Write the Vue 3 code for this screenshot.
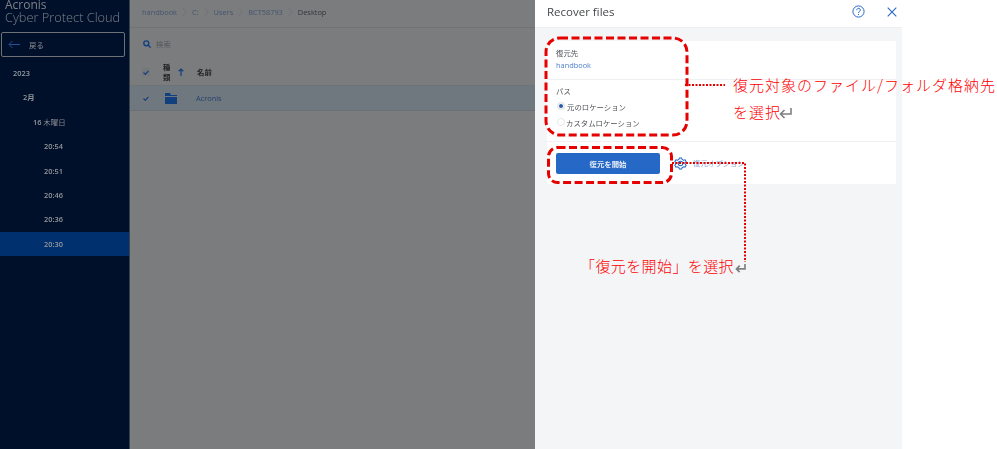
<template>
  <div class="screen">
    <aside class="sidebar">
      <div class="brand">
        <div class="brand-top">Acronis</div>
        <div class="brand-sub">Cyber Protect Cloud</div>
      </div>
      <button class="back" type="button">
        <svg width="12" height="9" viewBox="0 0 12 9" fill="none" stroke="#1f4f9a" stroke-width="1">
          <path d="M12 4.5H1M4.5 1L1 4.5 4.5 8" />
        </svg>
        <span>戻る</span>
      </button>
      <ul class="tree">
        <li
          v-for="row in tree"
          :key="row.label"
          :class="{ active: row.active }"
          :style="{ paddingLeft: row.indent + 'px' }"
        >
          <b>{{ row.label }}</b>{{ row.extra }}
        </li>
      </ul>
    </aside>

    <main class="browser">
      <nav class="crumbs">
        <template v-for="(c, i) in crumbs" :key="c">
          <span :class="{ last: i === crumbs.length - 1 }">{{ c }}</span>
          <svg v-if="i < crumbs.length - 1" width="5" height="8" viewBox="0 0 5 8" fill="none" stroke="#727375">
            <path d="M1 0l3 4-3 4" />
          </svg>
        </template>
      </nav>
      <div class="search">
        <svg width="8" height="8" viewBox="0 0 9 9" fill="none" stroke="#123f7e" stroke-width="1.5">
          <circle cx="3.7" cy="3.7" r="2.8" />
          <path d="M5.8 5.8L8.6 8.6" />
        </svg>
        <span>検索</span>
      </div>
      <div class="thead">
        <span class="check"><svg width="6" height="5" viewBox="0 0 6 5" fill="none" stroke="#123f7e" stroke-width="1.2"><path d="M.5 2.5l1.8 1.8L5.5.8" /></svg></span>
        <span class="kind">種<br />類</span>
        <svg class="sort" width="6" height="8" viewBox="0 0 6 8" fill="none" stroke="#123f7e" stroke-width="1.2">
          <path d="M3 8V1M.7 3.2L3 1l2.3 2.2" />
        </svg>
        <span class="name">名前</span>
      </div>
      <div class="trow">
        <span class="check"><svg width="6" height="5" viewBox="0 0 6 5" fill="none" stroke="#123f7e" stroke-width="1.2"><path d="M.5 2.5l1.8 1.8L5.5.8" /></svg></span>
        <svg class="folder" width="12" height="11" viewBox="0 0 12 11" fill="#123f7e">
          <path d="M0 0h5l1 2h6v1H0zM0 4h12v7H0z" />
        </svg>
        <span class="file">Acronis</span>
      </div>
    </main>

    <section class="panel">
      <header class="panel-head">
        <h1>Recover files</h1>
        <svg width="13" height="13" viewBox="0 0 13 13" fill="none" stroke="#2668c5">
          <circle cx="6.5" cy="6.5" r="5.6" />
          <path d="M4.7 5.2c0-2.4 3.7-2.4 3.7-.2 0 1.4-1.9 1.4-1.9 2.9M6.5 9v1" />
        </svg>
        <svg class="close" width="10" height="10" viewBox="0 0 10 10" fill="none" stroke="#2668c5" stroke-width="1.1">
          <path d="M.7.7l8.6 8.6M9.3.7L.7 9.3" />
        </svg>
      </header>
      <div class="card">
        <div class="field">
          <label>復元先</label>
          <a>handbook</a>
        </div>
        <div class="field path">
          <label>パス</label>
          <div class="radio on"><i></i>元のロケーション</div>
          <div class="radio"><i></i>カスタムロケーション</div>
        </div>
        <div class="actions">
          <button class="start" type="button">復元を開始</button>
          <svg width="13" height="13" viewBox="0 0 14 14" fill="none" stroke="#2668c5" stroke-width="1.1">
            <circle cx="7" cy="7" r="2.4" />
            <path d="M5.8 1h2.4l.5 1.6 1.6.9 1.6-.4 1.2 2-1.1 1.2v1.4l1.1 1.2-1.2 2-1.6-.4-1.6.9-.5 1.6H5.8l-.5-1.6-1.6-.9-1.6.4-1.2-2 1.1-1.2V6.3L.9 5.1l1.2-2 1.6.4 1.6-.9z" />
          </svg>
          <a>復元オプション</a>
        </div>
      </div>
    </section>

    <div class="margin"></div>

    <!-- annotations drawn over the screenshot -->
    <svg class="marks" width="997" height="449" viewBox="0 0 997 449" fill="none" stroke="#e60000">
      <g stroke-width="3" stroke-dasharray="8 3.5">
        <rect x="546" y="38" width="141" height="97" rx="14" />
        <rect x="548.5" y="147.5" width="123" height="35" rx="9" />
      </g>
      <g stroke-width="2" stroke-dasharray="2 1.5">
        <path d="M685 85h40" />
        <path d="M672 163h73v99" />
      </g>
    </svg>
    <p class="note note-dest">
      復元対象のファイル/フォルダ格納先を<br />を選択<svg class="ret" width="13" height="11" viewBox="0 0 13 11" fill="none" stroke="#7f7f7f" stroke-width="1.6"><path d="M12 0v6H1.5M5.5 2L1.5 6l4 4" /></svg>
    </p>
    <p class="note note-start">
      「復元を開始」を選択<svg class="ret" width="11" height="9" viewBox="0 0 13 11" fill="none" stroke="#7f7f7f" stroke-width="2"><path d="M12 0v6H1.5M5.5 2L1.5 6l4 4" /></svg>
    </p>
  </div>
</template>

<script setup>
const tree = [
  { label: "2023", extra: "", indent: 13 },
  { label: "2月", extra: "", indent: 23 },
  { label: "16", extra: " 木曜日", indent: 33 },
  { label: "20:54", extra: "", indent: 44 },
  { label: "20:51", extra: "", indent: 44 },
  { label: "20:46", extra: "", indent: 44 },
  { label: "20:36", extra: "", indent: 44 },
  { label: "20:30", extra: "", indent: 44, active: true },
];
const crumbs = ["handbook", "C:", "Users", "BCT58793", "Desktop"];
</script>

<style>
html,
body {
  margin: 0;
  padding: 0;
  background: #fff;
}
</style>

<style scoped>
.screen {
  position: relative;
  display: flex;
  width: 997px;
  height: 449px;
  overflow: hidden;
  font-family: "Open Sans", "Noto Sans CJK JP", sans-serif;
  font-size: 7.4px;
  background: #fff;
}
.sidebar,
.browser,
.panel {
  filter: blur(0.35px);
}
.sidebar {
  width: 129px;
  flex: none;
  background: #00102a;
  border-right: 1px solid #3a4250;
  color: #8f9296;
}
.brand {
  height: 32px;
  padding-left: 5px;
  color: #7d8187;
  overflow: hidden;
}
.brand-top {
  margin-top: -2px;
  font-size: 12px;
  line-height: 13px;
}
.brand-sub {
  font-size: 12.8px;
  line-height: 13px;
  font-weight: 300;
  white-space: nowrap;
}
.back {
  display: flex;
  align-items: center;
  gap: 9px;
  width: 124px;
  height: 25px;
  margin: 0 0 4px 1px;
  padding: 0 0 0 6px;
  background: none;
  border: 1px solid #6e7175;
  border-radius: 2px;
  color: #8f9296;
  font: inherit;
}
.tree {
  margin: 0;
  padding: 0;
  list-style: none;
}
.tree li {
  height: 24.4px;
  line-height: 24.4px;
  color: #85888c;
}
.tree li b {
  font-weight: 600;
  color: #95989c;
}
.tree li.active {
  background: #00306e;
}
.browser {
  width: 405px;
  flex: none;
  background: #7b7c7e;
  color: #2c2d2f;
}
.crumbs {
  display: flex;
  align-items: center;
  gap: 5px;
  height: 28px;
  padding: 0 0 4px 12px;
  border-bottom: 1px solid #717274;
  color: #44556e;
  box-sizing: border-box;
}
.crumbs .last {
  color: #33363a;
}
.search {
  display: flex;
  align-items: center;
  gap: 5px;
  height: 31px;
  padding-left: 13px;
  color: #55585b;
}
.thead,
.trow {
  display: flex;
  align-items: center;
  padding-left: 12px;
  box-sizing: border-box;
  border-bottom: 1px solid #717274;
}
.thead {
  height: 27px;
  font-weight: 700;
  line-height: 10px;
  color: #1e2022;
}
.trow {
  height: 25px;
  background: #6f777f;
  border-bottom-color: #6a6f75;
}
.check {
  display: flex;
  align-items: center;
  justify-content: center;
  width: 8px;
  height: 8px;
  background: #74787d;
  border-radius: 1px;
}
.kind {
  margin-left: 13px;
  width: 8px;
}
.sort {
  margin-left: 7px;
}
.name {
  margin-left: 13px;
}
.folder {
  margin-left: 15px;
}
.file {
  margin-left: 19px;
  color: #27426e;
}
.panel {
  width: 367px;
  flex: none;
  background: #f3f5f7;
  color: #4e5054;
}
.panel-head {
  display: flex;
  align-items: center;
  height: 28px;
  padding: 0 0 4px 12px;
  background: #fff;
  border-bottom: 1px solid #eceef0;
  box-sizing: border-box;
}
.panel-head h1 {
  flex: 1;
  margin: 0;
  font-size: 11.5px;
  font-weight: 400;
  color: #45474a;
}
.panel-head .close {
  margin: 0 5px 0 22px;
}
.card {
  width: 349px;
  margin: 13px 0 0 12px;
  background: #fff;
}
.field {
  padding: 6px 0 7px 9px;
  height: 39px;
  box-sizing: border-box;
  border-bottom: 1px solid #eef0f2;
}
.field label {
  display: block;
  line-height: 12px;
}
.field a,
.actions a {
  display: block;
  line-height: 12px;
  color: #4f7fcb;
}
.field.path {
  height: 62px;
  padding-top: 5px;
}
.field.path label {
  margin-bottom: 1px;
}
.radio {
  display: flex;
  align-items: center;
  gap: 1px;
  height: 16px;
}
.radio i {
  width: 6px;
  height: 6px;
  margin-left: 1px;
  border: 1px solid #e6e8ea;
  border-radius: 50%;
}
.radio.on i {
  background: #2a5ba8;
  border-color: #fff;
  box-shadow: 0 0 0 1px #e6e8ea;
  width: 4px;
  height: 4px;
  margin: 0 2px;
}
.actions {
  display: flex;
  align-items: center;
  height: 42px;
  padding-left: 9px;
}
.start {
  width: 104px;
  height: 21px;
  margin-right: 14px;
  border: none;
  border-radius: 2px;
  background: #2668c5;
  color: #e8eefa;
  font: inherit;
  font-weight: 700;
}
.actions a {
  margin-left: 6px;
  color: #8ea9db;
}
.margin {
  flex: 1;
  background: #fff;
}
.marks {
  position: absolute;
  left: 0;
  top: 0;
  pointer-events: none;
}
.note {
  position: absolute;
  margin: 0;
  color: #f00;
  font-family: "Noto Sans CJK JP", sans-serif;
  font-size: 15px;
  font-weight: 300;
  letter-spacing: 1px;
  white-space: nowrap;
}
.note-dest {
  left: 733px;
  top: 71px;
  line-height: 27px;
}
.note-dest .ret {
  margin-left: -2px;
}
.note-start {
  left: 580px;
  top: 255px;
  line-height: 22px;
  letter-spacing: 0.4px;
}
.ret {
  margin-left: 1px;
  vertical-align: -1px;
}
</style>
